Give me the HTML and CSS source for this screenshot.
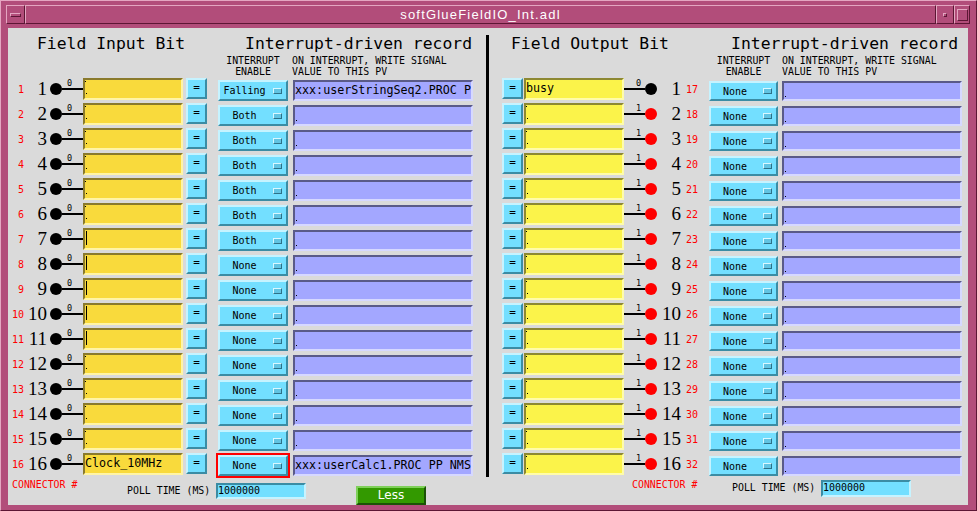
FILE: index.html
```html
<!DOCTYPE html>
<html>
<head>
<meta charset="utf-8">
<title>softGlueFieldIO_Int.adl</title>
<link rel="stylesheet" href="styles.css">
</head>
<body>
<div class="window">
  <div class="titlebar">
    <div class="tb-btn tb-menu"><i class="tb-bar"></i></div>
    <div class="tb-btn tb-title">softGlueFieldIO_Int.adl</div>
    <div class="tb-btn tb-min"><i class="tb-sq"></i></div>
    <div class="tb-btn tb-max"><i class="tb-big"></i></div>
  </div>
  <div class="content">
    <div class="panels">
      <div class="panel panel-l">
        <div class="hdr"><span>Field Input Bit</span><span>Interrupt-driven record</span></div>
        <div class="lbls"><div class="lbl-ie">INTERRUPT<br>ENABLE</div><div class="lbl-pv">ON INTERRUPT, WRITE SIGNAL<br>VALUE TO THIS PV</div></div>
        <div class="rows">
          <div class="row"><span class="rn">1</span><span class="bn">1</span><span class="conn"><i class="dot"></i><span class="wire">0</span></span><span class="fld yl e"></span><span class="eq">=</span><span class="menu"><span class="mt">Falling</span><i class="ind"></i></span><span class="fld pv">xxx:userStringSeq2.PROC P</span></div>
          <div class="row"><span class="rn">2</span><span class="bn">2</span><span class="conn"><i class="dot"></i><span class="wire">0</span></span><span class="fld yl e"></span><span class="eq">=</span><span class="menu"><span class="mt">Both</span><i class="ind"></i></span><span class="fld pv e"></span></div>
          <div class="row"><span class="rn">3</span><span class="bn">3</span><span class="conn"><i class="dot"></i><span class="wire">0</span></span><span class="fld yl e"></span><span class="eq">=</span><span class="menu"><span class="mt">Both</span><i class="ind"></i></span><span class="fld pv e"></span></div>
          <div class="row"><span class="rn">4</span><span class="bn">4</span><span class="conn"><i class="dot"></i><span class="wire">0</span></span><span class="fld yl e"></span><span class="eq">=</span><span class="menu"><span class="mt">Both</span><i class="ind"></i></span><span class="fld pv e"></span></div>
          <div class="row"><span class="rn">5</span><span class="bn">5</span><span class="conn"><i class="dot"></i><span class="wire">0</span></span><span class="fld yl e"></span><span class="eq">=</span><span class="menu"><span class="mt">Both</span><i class="ind"></i></span><span class="fld pv e"></span></div>
          <div class="row"><span class="rn">6</span><span class="bn">6</span><span class="conn"><i class="dot"></i><span class="wire">0</span></span><span class="fld yl e"></span><span class="eq">=</span><span class="menu"><span class="mt">Both</span><i class="ind"></i></span><span class="fld pv e"></span></div>
          <div class="row"><span class="rn">7</span><span class="bn">7</span><span class="conn"><i class="dot"></i><span class="wire">0</span></span><span class="fld yl cur"></span><span class="eq">=</span><span class="menu"><span class="mt">Both</span><i class="ind"></i></span><span class="fld pv e"></span></div>
          <div class="row"><span class="rn">8</span><span class="bn">8</span><span class="conn"><i class="dot"></i><span class="wire">0</span></span><span class="fld yl cur"></span><span class="eq">=</span><span class="menu"><span class="mt">None</span><i class="ind"></i></span><span class="fld pv e"></span></div>
          <div class="row"><span class="rn">9</span><span class="bn">9</span><span class="conn"><i class="dot"></i><span class="wire">0</span></span><span class="fld yl cur"></span><span class="eq">=</span><span class="menu"><span class="mt">None</span><i class="ind"></i></span><span class="fld pv e"></span></div>
          <div class="row"><span class="rn">10</span><span class="bn">10</span><span class="conn"><i class="dot"></i><span class="wire">0</span></span><span class="fld yl cur"></span><span class="eq">=</span><span class="menu"><span class="mt">None</span><i class="ind"></i></span><span class="fld pv e"></span></div>
          <div class="row"><span class="rn">11</span><span class="bn">11</span><span class="conn"><i class="dot"></i><span class="wire">0</span></span><span class="fld yl cur"></span><span class="eq">=</span><span class="menu"><span class="mt">None</span><i class="ind"></i></span><span class="fld pv e"></span></div>
          <div class="row"><span class="rn">12</span><span class="bn">12</span><span class="conn"><i class="dot"></i><span class="wire">0</span></span><span class="fld yl e"></span><span class="eq">=</span><span class="menu"><span class="mt">None</span><i class="ind"></i></span><span class="fld pv e"></span></div>
          <div class="row"><span class="rn">13</span><span class="bn">13</span><span class="conn"><i class="dot"></i><span class="wire">0</span></span><span class="fld yl e"></span><span class="eq">=</span><span class="menu"><span class="mt">None</span><i class="ind"></i></span><span class="fld pv e"></span></div>
          <div class="row"><span class="rn">14</span><span class="bn">14</span><span class="conn"><i class="dot"></i><span class="wire">0</span></span><span class="fld yl e"></span><span class="eq">=</span><span class="menu"><span class="mt">None</span><i class="ind"></i></span><span class="fld pv e"></span></div>
          <div class="row"><span class="rn">15</span><span class="bn">15</span><span class="conn"><i class="dot"></i><span class="wire">0</span></span><span class="fld yl e"></span><span class="eq">=</span><span class="menu"><span class="mt">None</span><i class="ind"></i></span><span class="fld pv e"></span></div>
          <div class="row"><span class="rn">16</span><span class="bn">16</span><span class="conn"><i class="dot"></i><span class="wire">0</span></span><span class="fld yl">Clock_10MHz</span><span class="eq">=</span><span class="menu sel"><span class="mt">None</span><i class="ind"></i></span><span class="fld pv">xxx:userCalc1.PROC PP NMS</span></div>
        </div>
      </div>
      <div class="divider"></div>
      <div class="panel panel-r">
        <div class="hdr"><span>Field Output Bit</span><span>Interrupt-driven record</span></div>
        <div class="lbls"><div class="lbl-ie">INTERRUPT<br>ENABLE</div><div class="lbl-pv">ON INTERRUPT, WRITE SIGNAL<br>VALUE TO THIS PV</div></div>
        <div class="rows">
          <div class="row"><span class="eq">=</span><span class="fld yr">busy</span><span class="conn"><span class="wire">0</span><i class="dot"></i></span><span class="bn">1</span><span class="rn">17</span><span class="menu"><span class="mt">None</span><i class="ind"></i></span><span class="fld pv e"></span></div>
          <div class="row"><span class="eq">=</span><span class="fld yr e"></span><span class="conn"><span class="wire">1</span><i class="dot red"></i></span><span class="bn">2</span><span class="rn">18</span><span class="menu"><span class="mt">None</span><i class="ind"></i></span><span class="fld pv e"></span></div>
          <div class="row"><span class="eq">=</span><span class="fld yr e"></span><span class="conn"><span class="wire">1</span><i class="dot red"></i></span><span class="bn">3</span><span class="rn">19</span><span class="menu"><span class="mt">None</span><i class="ind"></i></span><span class="fld pv e"></span></div>
          <div class="row"><span class="eq">=</span><span class="fld yr e"></span><span class="conn"><span class="wire">1</span><i class="dot red"></i></span><span class="bn">4</span><span class="rn">20</span><span class="menu"><span class="mt">None</span><i class="ind"></i></span><span class="fld pv e"></span></div>
          <div class="row"><span class="eq">=</span><span class="fld yr e"></span><span class="conn"><span class="wire">1</span><i class="dot red"></i></span><span class="bn">5</span><span class="rn">21</span><span class="menu"><span class="mt">None</span><i class="ind"></i></span><span class="fld pv e"></span></div>
          <div class="row"><span class="eq">=</span><span class="fld yr e"></span><span class="conn"><span class="wire">1</span><i class="dot red"></i></span><span class="bn">6</span><span class="rn">22</span><span class="menu"><span class="mt">None</span><i class="ind"></i></span><span class="fld pv e"></span></div>
          <div class="row"><span class="eq">=</span><span class="fld yr e"></span><span class="conn"><span class="wire">1</span><i class="dot red"></i></span><span class="bn">7</span><span class="rn">23</span><span class="menu"><span class="mt">None</span><i class="ind"></i></span><span class="fld pv e"></span></div>
          <div class="row"><span class="eq">=</span><span class="fld yr e"></span><span class="conn"><span class="wire">1</span><i class="dot red"></i></span><span class="bn">8</span><span class="rn">24</span><span class="menu"><span class="mt">None</span><i class="ind"></i></span><span class="fld pv e"></span></div>
          <div class="row"><span class="eq">=</span><span class="fld yr e"></span><span class="conn"><span class="wire">1</span><i class="dot red"></i></span><span class="bn">9</span><span class="rn">25</span><span class="menu"><span class="mt">None</span><i class="ind"></i></span><span class="fld pv e"></span></div>
          <div class="row"><span class="eq">=</span><span class="fld yr e"></span><span class="conn"><span class="wire">1</span><i class="dot red"></i></span><span class="bn">10</span><span class="rn">26</span><span class="menu"><span class="mt">None</span><i class="ind"></i></span><span class="fld pv e"></span></div>
          <div class="row"><span class="eq">=</span><span class="fld yr e"></span><span class="conn"><span class="wire">1</span><i class="dot red"></i></span><span class="bn">11</span><span class="rn">27</span><span class="menu"><span class="mt">None</span><i class="ind"></i></span><span class="fld pv e"></span></div>
          <div class="row"><span class="eq">=</span><span class="fld yr e"></span><span class="conn"><span class="wire">1</span><i class="dot red"></i></span><span class="bn">12</span><span class="rn">28</span><span class="menu"><span class="mt">None</span><i class="ind"></i></span><span class="fld pv e"></span></div>
          <div class="row"><span class="eq">=</span><span class="fld yr e"></span><span class="conn"><span class="wire">1</span><i class="dot red"></i></span><span class="bn">13</span><span class="rn">29</span><span class="menu"><span class="mt">None</span><i class="ind"></i></span><span class="fld pv e"></span></div>
          <div class="row"><span class="eq">=</span><span class="fld yr e"></span><span class="conn"><span class="wire">1</span><i class="dot red"></i></span><span class="bn">14</span><span class="rn">30</span><span class="menu"><span class="mt">None</span><i class="ind"></i></span><span class="fld pv e"></span></div>
          <div class="row"><span class="eq">=</span><span class="fld yr e"></span><span class="conn"><span class="wire">1</span><i class="dot red"></i></span><span class="bn">15</span><span class="rn">31</span><span class="menu"><span class="mt">None</span><i class="ind"></i></span><span class="fld pv e"></span></div>
          <div class="row"><span class="eq">=</span><span class="fld yr e"></span><span class="conn"><span class="wire">1</span><i class="dot red"></i></span><span class="bn">16</span><span class="rn">32</span><span class="menu"><span class="mt">None</span><i class="ind"></i></span><span class="fld pv e"></span></div>
        </div>
      </div>
    </div>
    <div class="footer">
      <div class="foot foot-l">
        <span class="conlbl">CONNECTOR #</span>
        <span class="polllbl">POLL TIME (MS)</span>
        <span class="pollfld">1000000</span>
        <span class="less">Less</span>
      </div>
      <div class="foot foot-r">
        <span class="conlbl">CONNECTOR #</span>
        <span class="polllbl">POLL TIME (MS)</span>
        <span class="pollfld">1000000</span>
      </div>
    </div>
  </div>
</div>
</body>
</html>
```

FILE: styles.css
```css
* { box-sizing: border-box; }
html, body { margin: 0; padding: 0; }
body { background: #b24d7a; }

.window {
  width: 977px;
  height: 511px;
  background: #b24d7a;
  border: 1px solid;
  border-color: #e4a6c1 #5c1634 #5c1634 #e4a6c1;
  padding: 4px 8px 5px 7px;
  display: flex;
  flex-direction: column;
}

.titlebar {
  height: 19px;
  margin: 0 -2px 4px;
  display: flex;
  flex: none;
}
.tb-btn {
  border: 1px solid;
  border-color: #e4a6c1 #5c1634 #5c1634 #e4a6c1;
  background: #b24d7a;
  display: flex;
  align-items: center;
  justify-content: center;
}
.tb-menu { width: 19px; }
.tb-title {
  flex: 1;
  color: #fff;
  font-family: "Liberation Sans", Arial, sans-serif;
  font-size: 13px;
  letter-spacing: 1.2px;
  line-height: 17px;
}
.tb-min { width: 18px; }
.tb-max { width: 16px; }
.tb-bar {
  width: 11px;
  height: 4px;
  border: 1px solid;
  border-color: #e4a6c1 #5c1634 #5c1634 #e4a6c1;
}
.tb-sq {
  width: 4px;
  height: 4px;
  border: 1px solid;
  border-color: #e4a6c1 #5c1634 #5c1634 #e4a6c1;
}
.tb-big {
  width: 11px;
  height: 12px;
  border: 1px solid;
  border-color: #e4a6c1 #5c1634 #5c1634 #e4a6c1;
}

.content {
  flex: 1;
  background: #dadada;
  padding-top: 7px;
  display: flex;
  flex-direction: column;
  font-family: "DejaVu Sans Mono", monospace;
  color: #000;
}

.panels { display: flex; }
.panel-l { width: 465px; }
.panel-r { width: 473px; }
.divider {
  width: 3px;
  background: #000;
  margin: 0 0 0 13px;
}

.hdr {
  height: 18px;
  line-height: 18px;
  font-size: 16.4px;
  display: flex;
  justify-content: space-between;
  white-space: nowrap;
}
.panel-l .hdr { padding: 0 1px 0 29px; }
.panel-r .hdr { padding: 0 4px 0 22px; }

.lbls {
  margin-top: 2px;
  height: 22px;
  font-size: 9.9px;
  line-height: 11px;
  display: flex;
  white-space: nowrap;
}
.lbl-ie { text-align: center; }
.lbl-pv { margin-left: 4px; }
.panel-l .lbls { padding-left: 210px; }
.panel-l .lbl-ie { width: 70px; }
.panel-r .lbls { padding-left: 220px; }
.panel-r .lbl-ie { width: 69px; }

.row {
  height: 25px;
  display: flex;
  align-items: flex-start;
}

.rn {
  color: #f00;
  font-size: 10px;
  line-height: 25px;
  white-space: nowrap;
}
.panel-l .rn { width: 16px; text-align: right; }
.panel-r .rn { width: 28px; padding-left: 5px; }

.bn {
  font-family: "Liberation Serif", serif;
  font-size: 19px;
  line-height: 24px;
  text-align: right;
}
.panel-l .bn { width: 23px; }
.panel-r .bn { width: 21px; }

.conn {
  width: 36px;
  display: flex;
  align-items: flex-start;
}
.dot {
  flex: none;
  width: 12px;
  height: 12px;
  margin-top: 6px;
  border-radius: 50%;
  background: #000;
}
.dot.red { background: #f00; }
.wire {
  flex: 1;
  height: 13px;
  padding-top: 2px;
  border-bottom: 2px solid #000;
  font-size: 8.5px;
  line-height: 9px;
}
.panel-l .dot { margin-left: 3px; }
.panel-l .wire { padding-left: 5px; }
.panel-r .dot { margin-right: 3px; }
.panel-r .wire { text-align: right; padding-right: 4px; }

.fld {
  position: relative;
  border: 2px solid;
  overflow: hidden;
  white-space: nowrap;
  font-size: 11.7px;
  line-height: 17px;
}
.yl, .yr {
  width: 100px;
  height: 22px;
  margin-top: 1px;
}
.yl {
  background: #f9da3c;
  border-color: #8a7a2c #fff4a6 #fff4a6 #8a7a2c;
}
.yr {
  background: #fbf34a;
  border-color: #8d8832 #fffcaa #fffcaa #8d8832;
}
.panel-r .yr { margin-left: 1px; }

.pv {
  width: 180px;
  height: 21px;
  margin-top: 3px;
  background: #a3a7ff;
  border-color: #5a5a88 #d6d8ff #d6d8ff #5a5a88;
  line-height: 16px;
}
.panel-l .pv { margin-left: 5px; }
.panel-r .pv { margin-left: 4px; margin-top: 4px; height: 20px; }

.e::after {
  content: "";
  position: absolute;
  left: 1px;
  top: 13px;
  width: 1px;
  height: 1px;
  background: #000;
}
.yl.e::before, .yr.e::before {
  content: "";
  position: absolute;
  left: 0;
  top: 1px;
  width: 1px;
  height: 1px;
  background: #000;
}
.cur::before {
  content: "";
  position: absolute;
  left: 1px;
  top: 1px;
  width: 1px;
  height: 14px;
  background: #000;
}

.eq {
  width: 21px;
  height: 21px;
  margin-top: 1px;
  background: #73dfff;
  border: 2px solid;
  border-color: #c6f3ff #3b8ca4 #3b8ca4 #c6f3ff;
  text-align: center;
  font-size: 11px;
  line-height: 16px;
}
.panel-l .eq { margin-left: 3px; }
.panel-r .eq { margin-left: 13px; }

.menu {
  height: 21px;
  margin-top: 3px;
  background: #73dfff;
  border: 2px solid;
  border-color: #c6f3ff #3b8ca4 #3b8ca4 #c6f3ff;
  display: flex;
  align-items: center;
  font-size: 10px;
  white-space: nowrap;
}
.panel-l .menu { width: 70px; margin-left: 11px; }
.panel-r .menu { width: 69px; margin-top: 4px; height: 20px; }
.mt { flex: 1; text-align: center; }
.ind {
  flex: none;
  width: 9px;
  height: 6px;
  margin: 0 4px;
  background: #62c4e2;
  border: 1px solid;
  border-color: #d8f7ff #2d7188 #2d7188 #d8f7ff;
}
.menu.sel { outline: 2px solid #f00; }

.footer {
  height: 28px;
  display: flex;
  font-size: 9.9px;
  line-height: 11px;
  white-space: nowrap;
}
.foot { display: flex; align-items: flex-start; }
.foot-l { width: 481px; }
.conlbl { color: #f00; margin-top: 2px; }
.foot-l .conlbl { margin-left: 4px; width: 115px; }
.foot-r .conlbl { margin-left: 143px; width: 100px; }
.polllbl { width: 89px; }
.foot-l .polllbl { margin-top: 8px; }
.foot-r .polllbl { margin-top: 5px; }
.pollfld {
  width: 90px;
  height: 16px;
  background: #73dfff;
  border: 2px solid;
  border-color: #3b8ca4 #c6f3ff #c6f3ff #3b8ca4;
  font-size: 10px;
  line-height: 12px;
}
.foot-l .pollfld { margin-top: 6px; }
.foot-r .pollfld { margin-top: 3px; height: 17px; }
.less {
  margin-left: 50px;
  margin-top: 9px;
  width: 70px;
  height: 19px;
  background: #339900;
  border: 2px solid;
  border-color: #7fd05a #1b5206 #1b5206 #7fd05a;
  color: #fff;
  font-family: "DejaVu Sans", sans-serif;
  font-size: 12px;
  line-height: 15px;
  text-align: center;
}
```
